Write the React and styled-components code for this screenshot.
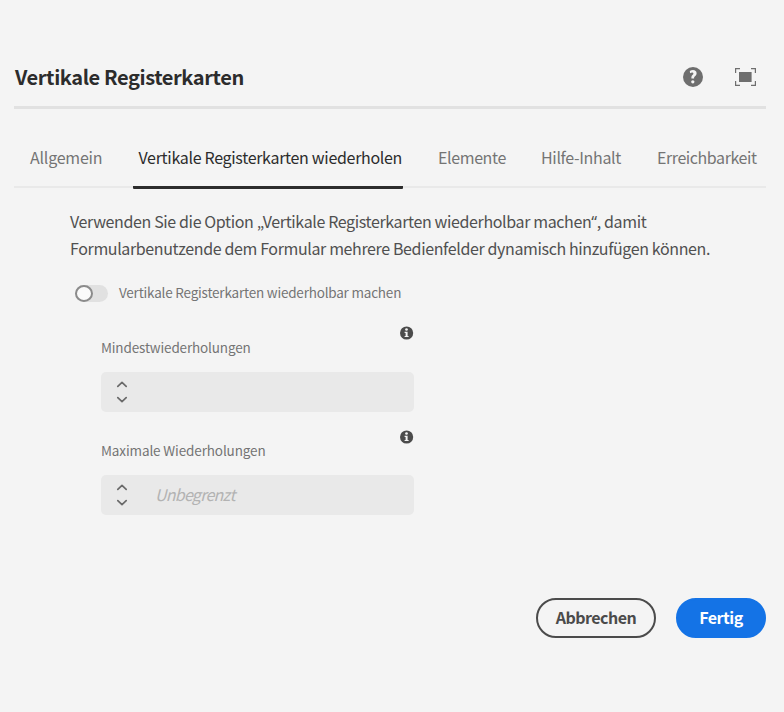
import React from "react";
import styled, { createGlobalStyle } from "styled-components";

const GlobalStyle = createGlobalStyle`
  *, *::before, *::after { box-sizing: border-box; }
  body {
    margin: 0;
    background: #f4f4f4;
    color: #4b4b4b;
    font-family: "Noto Sans CJK SC", "Noto Sans", sans-serif;
    font-size: 16px;
  }
`;

const Dialog = styled.section`
  width: 784px;
  height: 712px;
  padding: 46px 18px 0 14px;
  background: #f4f4f4;
  display: flex;
  flex-direction: column;
`;

const Header = styled.header`
  display: flex;
  align-items: center;
  justify-content: space-between;
  height: 63px;
  border-bottom: 3px solid #e1e1e1;
  flex: none;
`;

const Title = styled.h1`
  margin: 2px 0 0 1px;
  font-size: 20px;
  line-height: 30px;
  font-weight: 700;
  letter-spacing: -0.4px;
  color: #2c2c2c;
  white-space: nowrap;
`;

const HeaderActions = styled.div`
  display: flex;
  align-items: center;
  gap: 32px;
  margin: 2px 10px 0 0;
`;

const IconButton = styled.button`
  display: flex;
  padding: 0;
  border: 0;
  background: none;
  color: #6e6e6e;
`;

const TabList = styled.nav`
  display: flex;
  flex: none;
  height: 79px;
  border-bottom: 2px solid #e9e9e9;
`;

const Tab = styled.button`
  flex: none;
  display: flex;
  align-items: flex-start;
  width: ${(p) => p.$width}px;
  height: 80px;
  margin: 0 ${(p) => p.$gap || 0}px 0 0;
  padding: 36px 0 0 ${(p) => p.$inset || 0}px;
  border: 0;
  border-bottom: 3px solid ${(p) => (p.$active ? "#2c2c2c" : "transparent")};
  border-radius: 1px;
  background: none;
  color: ${(p) => (p.$active ? "#2c2c2c" : "#747474")};
  font: inherit;
  line-height: 24px;
  letter-spacing: ${(p) => p.$track}px;
  white-space: nowrap;
`;

const Panel = styled.main`
  flex: none;
  display: flex;
  flex-direction: column;
  padding: 20px 0 0 56px;
`;

const Description = styled.p`
  margin: 0;
  line-height: 27px;
  color: #505050;
`;

const DescriptionLine = styled.span`
  display: block;
  height: 27px;
  white-space: nowrap;
  letter-spacing: ${(p) => p.$track}px;
`;

const Quote = styled.span`
  font-family: "Noto Sans", sans-serif;
  line-height: 1;
`;

const SwitchRow = styled.div`
  display: flex;
  align-items: center;
  height: 20px;
  gap: 11px;
  margin: 21px 0 0 5px;
`;

const SwitchTrack = styled.span`
  width: 33px;
  height: 17px;
  border-radius: 9px;
  background: #e1e1e1;
`;

const SwitchKnob = styled.span`
  display: block;
  width: 18px;
  height: 17px;
  border: 2px solid #8b8b8b;
  border-radius: 50%;
  background: #fafafa;
`;

const Label = styled.label`
  font-size: 13.5px;
  line-height: 20px;
  letter-spacing: ${(p) => p.$track}px;
  color: #747474;
  white-space: nowrap;
`;

const SwitchLabel = styled(Label)`
  margin-bottom: 2px;
`;

const Fields = styled.div`
  display: flex;
  flex-direction: column;
  gap: 18px;
  width: 313px;
  margin: 23px 0 0 31px;
`;

const Field = styled.div`
  display: flex;
  flex-direction: column;
`;

const FieldHead = styled.div`
  display: flex;
  justify-content: space-between;
  align-items: flex-start;
  height: ${(p) => p.$height}px;
`;

const FieldLabel = styled(Label)`
  margin-top: ${(p) => p.$top}px;
`;

const NumberBox = styled.div`
  display: flex;
  align-items: center;
  height: 40px;
  border-radius: 5px;
  background: #e9e9e9;
`;

const Stepper = styled.div`
  display: flex;
  flex-direction: column;
  gap: 8px;
  width: 12px;
  margin: 0 27px 0 15px;
  color: #6a6a6a;
`;

const NumberInput = styled.input`
  width: 240px;
  height: 40px;
  padding: 0 0 2px;
  border: 0;
  outline: 0;
  background: none;
  font: italic 16px "Noto Sans CJK SC", sans-serif;
  letter-spacing: -0.75px;
  &::placeholder { color: #b3b3b3; opacity: 1; }
`;

const Footer = styled.footer`
  display: flex;
  justify-content: flex-end;
  gap: 20px;
  margin-top: 83px;
`;

const Button = styled.button`
  width: ${(p) => p.$width}px;
  height: 40px;
  padding: 0 0 2px;
  border: 2px solid ${(p) => (p.$primary ? "#1473e6" : "#4b4b4b")};
  border-radius: 20px;
  background: ${(p) => (p.$primary ? "#1473e6" : "transparent")};
  color: ${(p) => (p.$primary ? "#fff" : "#4b4b4b")};
  font: 700 16px/24px "Noto Sans CJK SC", sans-serif;
  letter-spacing: -0.5px;
`;

const HelpIcon = () => (
  <svg width="20" height="20" viewBox="0 0 20 20">
    <circle cx="10" cy="10" r="10" fill="currentColor" />
    <path d="M6.8 4C7.8 3.4 8.9 3.1 10 3.1c2.3 0 3.6 1.3 3.6 3.1 0 1.4-.8 2.2-1.6 3-.7.6-.9 1-.9 1.8v.6H8.4v-.7c-.1-1.4.3-2.1 1.1-2.9.7-.6.9-1 .9-1.5 0-.6-.4-.9-1.2-.9-.7 0-1.4.2-2.1.6z" fill="#f4f4f4" />
    <circle cx="9.8" cy="14.8" r="1.65" fill="#f4f4f4" />
  </svg>
);

const FullscreenIcon = () => (
  <svg width="21" height="18" viewBox="0 0 21 18" fill="none">
    <path d="M.6 5V.6H5M16 .6h4.4V5M20.4 13v4.4H16M5 17.4H.6V13" stroke="currentColor" strokeWidth="1.2" />
    <rect x="4" y="4" width="12.6" height="10" fill="currentColor" />
  </svg>
);

const InfoIcon = () => (
  <svg width="14" height="14" viewBox="0 0 14 14">
    <circle cx="6.6" cy="7" r="6.6" fill="#4b4b4b" />
    <circle cx="6.5" cy="3.5" r="1.35" fill="#f4f4f4" />
    <path d="M4.6 5.7h3v4.2h1V11.1H4.6V9.9h1V6.9h-1z" fill="#f4f4f4" />
  </svg>
);

const Chevron = ({ down }) => (
  <svg width="12" height="7" viewBox="0 0 12 7" fill="none">
    <path d={down ? "M1.8 1.6 6 5.6l4.2-4" : "M1.8 5.4 6 1.4l4.2 4"} stroke="currentColor" strokeWidth="1.7" strokeLinecap="round" strokeLinejoin="round" />
  </svg>
);

const NumberField = ({ id, label, track, headHeight, labelTop, placeholder }) => (
  <Field>
    <FieldHead $height={headHeight}>
      <FieldLabel htmlFor={id} $track={track} $top={labelTop}>{label}</FieldLabel>
      <InfoIcon />
    </FieldHead>
    <NumberBox>
      <Stepper>
        <Chevron />
        <Chevron down />
      </Stepper>
      <NumberInput id={id} placeholder={placeholder} />
    </NumberBox>
  </Field>
);

export default function App() {
  return (
    <>
      <GlobalStyle />
      <Dialog>
        <Header>
          <Title>Vertikale Registerkarten</Title>
          <HeaderActions>
            <IconButton aria-label="Hilfe"><HelpIcon /></IconButton>
            <IconButton aria-label="Vollbild"><FullscreenIcon /></IconButton>
          </HeaderActions>
        </Header>
        <TabList>
          <Tab $width={103} $gap={16} $inset={16} $track={-0.22}>Allgemein</Tab>
          <Tab $width={270} $gap={35} $inset={5.5} $track={-0.31} $active>Vertikale Registerkarten wiederholen</Tab>
          <Tab $width={70} $gap={33} $track={-0.38}>Elemente</Tab>
          <Tab $width={82} $gap={34} $track={-0.33}>Hilfe-Inhalt</Tab>
          <Tab $width={108} $track={-0.42}>Erreichbarkeit</Tab>
        </TabList>
        <Panel>
          <Description>
            <DescriptionLine $track={-0.37}>Verwenden Sie die Option „Vertikale Registerkarten wiederholbar machen<Quote>“</Quote>, damit</DescriptionLine>
            <DescriptionLine $track={-0.37}>Formularbenutzende dem Formular mehrere Bedienfelder dynamisch hinzufügen können.</DescriptionLine>
          </Description>
          <SwitchRow>
            <SwitchTrack><SwitchKnob /></SwitchTrack>
            <SwitchLabel $track={-0.2}>Vertikale Registerkarten wiederholbar machen</SwitchLabel>
          </SwitchRow>
          <Fields>
            <NumberField id="min" label="Mindestwiederholungen" track={-0.15} headHeight={46} labelTop={11} />
            <NumberField id="max" label="Maximale Wiederholungen" track={-0.12} headHeight={45} labelTop={10} placeholder="Unbegrenzt" />
          </Fields>
        </Panel>
        <Footer>
          <Button $width={120}>Abbrechen</Button>
          <Button $width={90} $primary>Fertig</Button>
        </Footer>
      </Dialog>
    </>
  );
}
